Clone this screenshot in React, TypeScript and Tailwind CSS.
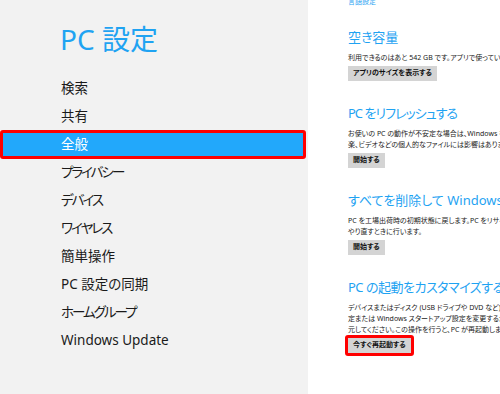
import React from "react";

type MenuItem = { label: string; kana?: boolean };

const MENU: MenuItem[] = [
  { label: "検索" },
  { label: "共有" },
  { label: "全般" },
  { label: "プライバシー", kana: true },
  { label: "デバイス", kana: true },
  { label: "ワイヤレス", kana: true },
  { label: "簡単操作" },
  { label: "PC 設定の同期" },
  { label: "ホームグループ", kana: true },
  { label: "Windows Update" },
];

const FONT = {
  fontFamily: '"Segoe UI", "Noto Sans", "Noto Sans CJK JP", sans-serif',
  fontFeatureSettings: '"palt"',
};

function Btn({ label, marked }: { label: string; marked?: boolean }) {
  const btn = (
    <div className="flex h-[15px] items-center bg-[#d4d4d4] px-[5px] text-[7px] font-bold text-[#111]">
      {label}
    </div>
  );
  if (!marked) return btn;
  return <div className="-ml-[3px] -mt-[3px] flex rounded-[3px] border-[3px] border-[#ff0000]">{btn}</div>;
}

function Section({
  title,
  lines,
  button,
  marked,
  tight,
}: {
  title: string;
  lines: string[];
  button: string;
  marked?: boolean;
  tight?: string;
}) {
  return (
    <div>
      <h2 className={`text-[13px] leading-[20px] text-[#1fa3f2] whitespace-nowrap ${tight ?? ""}`}>{title}</h2>
      <div className="mt-[5px] text-[7px] leading-[11px] text-[#222] whitespace-nowrap">
        {lines.map((l) => (
          <p key={l}>{l}</p>
        ))}
      </div>
      <div className="mt-[3px] flex">
        <Btn label={button} marked={marked} />
      </div>
    </div>
  );
}

export default function App() {
  return (
    <div className="flex h-[394px] w-[500px] overflow-hidden bg-white" style={FONT}>
      {/* Left pane */}
      <aside className="w-[308px] shrink-0 bg-[#f2f2f2]">
        <h1 className="pl-[60px] pt-[22px] text-[28px] leading-[34px] text-[#1fa3f2]">PC 設定</h1>
        <ul className="mt-[18px]">
          {MENU.map((item) => {
            const active = item.label === "全般";
            const track = item.kana ? "tracking-[-2px]" : "";
            return (
              <li key={item.label} className="h-[28px]">
                {active ? (
                  <div className="h-[29px] w-[306px] rounded-[3px] border-[3px] border-[#ff0000] bg-[#22a8fb] pl-[58px] text-[13.5px] leading-[23px] text-white">
                    {item.label}
                  </div>
                ) : (
                  <div className={`pl-[61px] text-[13.5px] leading-[28px] text-[#1a1a1a] ${track}`}>{item.label}</div>
                )}
              </li>
            );
          })}
        </ul>
      </aside>

      {/* Right pane */}
      <main className="min-w-0 flex-1 overflow-hidden pl-[40px]">
        <p className="-mt-[3px] text-[7px] leading-[10px] text-[#1fa3f2]">言語設定</p>
        <div className="mt-[20px] flex flex-col gap-[22px]">
          <Section
            title="空き容量"
            lines={["利用できるのはあと 542 GB です。アプリで使っている容量を確認できます。"]}
            button="アプリのサイズを表示する"
          />
          <Section
            title="PC をリフレッシュする"
            tight="tracking-[-1px]"
            lines={[
              "お使いの PC の動作が不安定な場合は、Windows をリフレッシュできます。写真、音",
              "楽、ビデオなどの個人的なファイルには影響はありません。",
            ]}
            button="開始する"
          />
          <Section
            title="すべてを削除して Windows を再インストールする"
            lines={[
              "PC を工場出荷時の初期状態に戻します。PC をリサイクルするときや、完全に最初から",
              "やり直すときに行います。",
            ]}
            button="開始する"
          />
          <Section
            title="PC の起動をカスタマイズする"
            tight="tracking-[-0.5px]"
            lines={[
              "デバイスまたはディスク (USB ドライブや DVD など) から起動するか、PC のファームウェア設",
              "定または Windows スタートアップ設定を変更するか、システム イメージから Windows を復",
              "元してください。この操作を行うと、PC が再起動します。",
            ]}
            button="今すぐ再起動する"
            marked
          />
        </div>
      </main>
    </div>
  );
}
